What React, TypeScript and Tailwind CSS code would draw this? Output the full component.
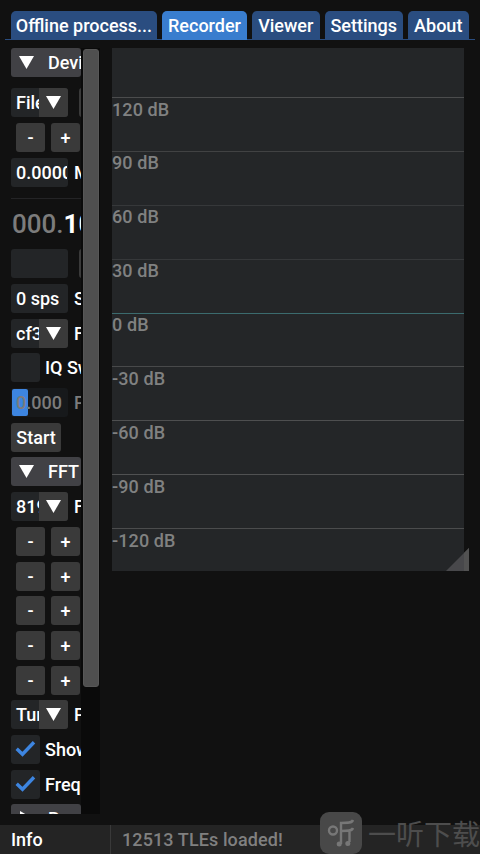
import type { ReactNode } from "react";
import clsx from "clsx";

const tabs = [
  { label: "Offline process...", width: "w-[146px]" },
  { label: "Recorder", width: "w-[85px]", active: true },
  { label: "Viewer", width: "w-[67.5px]" },
  { label: "Settings", width: "w-[78.5px]" },
  { label: "About", width: "w-[60.5px]" },
];

const gridLines = [
  { label: "120 dB", color: "border-[#4b4c4d]" },
  { label: "90 dB", color: "border-[#414243]" },
  { label: "60 dB", color: "border-[#36383a]" },
  { label: "30 dB", color: "border-[#36383a]" },
  { label: "0 dB", color: "border-[#3b6b6e]" },
  { label: "-30 dB", color: "border-[#48494a]" },
  { label: "-60 dB", color: "border-[#4e4f50]" },
  { label: "-90 dB", color: "border-[#505152]" },
  { label: "-120 dB", color: "border-[#4b4c4d]" },
];

function Arrow() {
  return (
    <svg width="15" height="13" viewBox="0 0 15 13" className="shrink-0">
      <path d="M0 0H15L7.5 13Z" fill="#fff" />
    </svg>
  );
}

function Row({ children, className }: { children?: ReactNode; className?: string }) {
  return (
    <div className={clsx("flex h-[29px] shrink-0 items-center overflow-hidden", className)}>
      {children}
    </div>
  );
}

function Header({ label }: { label: string }) {
  return (
    <Row className="rounded-[3px] bg-[#414145] pl-2">
      <Arrow />
      <span className="ml-[14px]">{label}</span>
    </Row>
  );
}

function Combo({ value, label }: { value: string; label: string }) {
  return (
    <Row>
      <div className="flex h-full w-[57px] shrink-0 overflow-hidden rounded-[3px] bg-[#232527]">
        <span className="w-7 overflow-hidden pl-[5px] leading-[29px]">{value}</span>
        <span className="flex w-[29px] items-center justify-center bg-[#3a3a3a]">
          <Arrow />
        </span>
      </div>
      <span className="ml-[6px]">{label}</span>
    </Row>
  );
}

function Field({ value, label }: { value?: string; label?: string }) {
  return (
    <Row>
      <div className="h-full w-[57px] shrink-0 overflow-hidden rounded-[3px] bg-[#232527]">
        <div className="ml-[5px] w-[51px] overflow-hidden leading-[29px]">{value}</div>
      </div>
      <span className="ml-[6px]">{label}</span>
    </Row>
  );
}

function Stepper() {
  return (
    <Row className="gap-[6px] pl-[5px]">
      <span className="h-full w-[29px] shrink-0 rounded-[3px] bg-[#3a3a3a] text-center leading-[29px]">-</span>
      <span className="h-full w-[29px] shrink-0 rounded-[3px] bg-[#3a3a3a] text-center leading-[29px]">+</span>
    </Row>
  );
}

function Check({ label, checked }: { label: string; checked?: boolean }) {
  return (
    <Row>
      <span className="flex h-full w-[29px] shrink-0 items-center justify-center rounded-[3px] bg-[#232527]">
        {checked && (
          <svg width="21" height="18" viewBox="0 0 21 18" fill="none">
            <path d="M1.7 8.8L7.5 14.3L19 2.3" stroke="#3d85e0" strokeWidth="3.4" />
          </svg>
        )}
      </span>
      <span className="ml-[5px]">{label}</span>
    </Row>
  );
}

// sliver of the widget that starts just before the panel is cut off
function Sliver() {
  return <span className="ml-[5px] h-[29px] w-4 shrink-0 rounded-[3px] bg-[#3a3a3a]" />;
}

function Sidebar() {
  return (
    <div className="flex h-[766px] w-[89px] shrink-0">
      <div className="flex w-[70px] shrink-0 flex-col overflow-hidden whitespace-nowrap">
        <Header label="Device" />
        <div className="mt-[11.4px] flex shrink-0 flex-col gap-[5.7px]">
          <div className="flex">
            <Combo value="File" label="" />
            <Sliver />
          </div>
          <Stepper />
          <Field value="0.0000" label="MHz" />
        </div>
        <div className="mt-[11px] h-px shrink-0 bg-[#242426]" />
        <div className="mt-[9px] flex h-8 shrink-0 items-center pl-[1px] text-[26px] leading-8">
          <span className="text-[#7c7c7c]">000.</span>
          <span className="font-bold">100</span>
        </div>
        <div className="mt-[9.6px] flex shrink-0 flex-col gap-[5.7px]">
          <div className="flex">
            <Field />
            <Sliver />
          </div>
          <Field value="0 sps" label="Samplerate" />
          <Combo value="cf32" label="Format" />
          <Check label="IQ Swap" />
          <Row className="text-[#7c7c7c]">
            <div className="flex h-full w-[57px] shrink-0 items-center rounded-[3px] bg-[#17191b]">
              <div className="ml-px h-[27px] w-[15.5px] shrink-0 rounded-[2px] bg-[#3d85e0]" />
              <span className="-ml-[11.5px]">0.000</span>
            </div>
            <span className="ml-[6px]">Progress</span>
          </Row>
          <Row className="w-[50px] justify-center rounded-[3px] bg-[#3a3a3a]">Start</Row>
          <Header label="FFT" />
          <Combo value="8192" label="FFT Size" />
          <Stepper />
          <Stepper />
          <Stepper />
          <Stepper />
          <Stepper />
          <Combo value="Turbo" label="Palette" />
          <Check label="Show Waterfall" checked />
          <Check label="Frequency" checked />
          <Row className="rounded-[3px] bg-[#414145] pl-[9px]">
            <svg width="13" height="15" viewBox="0 0 13 15" className="shrink-0">
              <path d="M0 0L13 7.5L0 15Z" fill="#fff" />
            </svg>
            <span className="ml-[15px]">Recording</span>
          </Row>
        </div>
      </div>
      <div className="w-[19px] bg-[#0a0a0a] pl-[2px]">
        <div className="mt-px h-[638px] w-4 rounded-[3px] border border-[#575757] bg-[#4f4f4f]" />
      </div>
    </div>
  );
}

function Plot() {
  return (
    <div className="relative ml-3 h-[523px] w-[357px] shrink-0">
      <div className="flex h-full w-[352px] flex-col overflow-hidden bg-[#242628] pt-[49px]">
        {gridLines.map((line) => (
          <div
            key={line.label}
            className={clsx("h-[53.9px] shrink-0 border-t pt-[0.5px] leading-[22px] tracking-[0.1px] text-[#808181]", line.color)}
          >
            {line.label}
          </div>
        ))}
      </div>
      <svg width="23" height="23" viewBox="0 0 23 23" className="absolute right-0 bottom-0">
        <path d="M0 23L23 0V23Z" fill="#48484b" />
        <path d="M18 5L23 0V23H18Z" fill="#525252" />
      </svg>
    </div>
  );
}

function Watermark() {
  return (
    <div className="absolute top-[812px] left-[320px] flex h-[42px] items-center whitespace-nowrap">
      <svg width="42" height="42" viewBox="0 0 42 42" fill="none" className="shrink-0">
        <rect width="42" height="42" rx="9" fill="#484848" />
        <g stroke="#777" strokeWidth="2.4">
          <circle cx="13" cy="18.5" r="4" />
          <path d="M33 8C32 11 28 11 21 11V32" />
          <path d="M21 19C28 19 32 19 33 16M29.500 19V30" />
        </g>
        <circle cx="19.200" cy="32" r="2.500" fill="#777" />
        <circle cx="27.800" cy="31.500" r="2.500" fill="#777" />
      </svg>
      <span className="ml-[6px] font-['Noto_Sans_CJK_SC',sans-serif] text-[28px] leading-[40px] font-normal text-[#4d4d4d]">
        一听下载
      </span>
    </div>
  );
}

export default function App() {
  return (
    <div className="relative flex h-[854px] w-[480px] flex-col overflow-hidden bg-[#111111] font-[Roboto,sans-serif] text-[18px] font-medium text-white">
      <div className="mx-[5px] mt-[11px] flex h-[29px] shrink-0 gap-[5px] border-b border-[#2a4d80] pl-[6px]">
        {tabs.map((tab) => (
          <div
            key={tab.label}
            className={clsx(
              "h-[29px] shrink-0 rounded-t-[5px] text-center leading-[30px] whitespace-nowrap",
              tab.width,
              tab.active ? "bg-[#397dce]" : "bg-[#2a4d80]"
            )}
          >
            {tab.label}
          </div>
        ))}
      </div>
      <div className="mt-2 flex h-[766px] shrink-0 pl-[11px]">
        <Sidebar />
        <Plot />
      </div>
      <div className="mt-[11px] flex h-[29px] shrink-0 items-center bg-[#242424]">
        <div className="h-full w-[111px] border-r border-[#393939] pl-[11px] leading-[30px]">Info</div>
        <div className="pl-[11px] tracking-[0.1px] leading-[30px] text-[#808080]">12513 TLEs loaded!</div>
      </div>
      <Watermark />
    </div>
  );
}
